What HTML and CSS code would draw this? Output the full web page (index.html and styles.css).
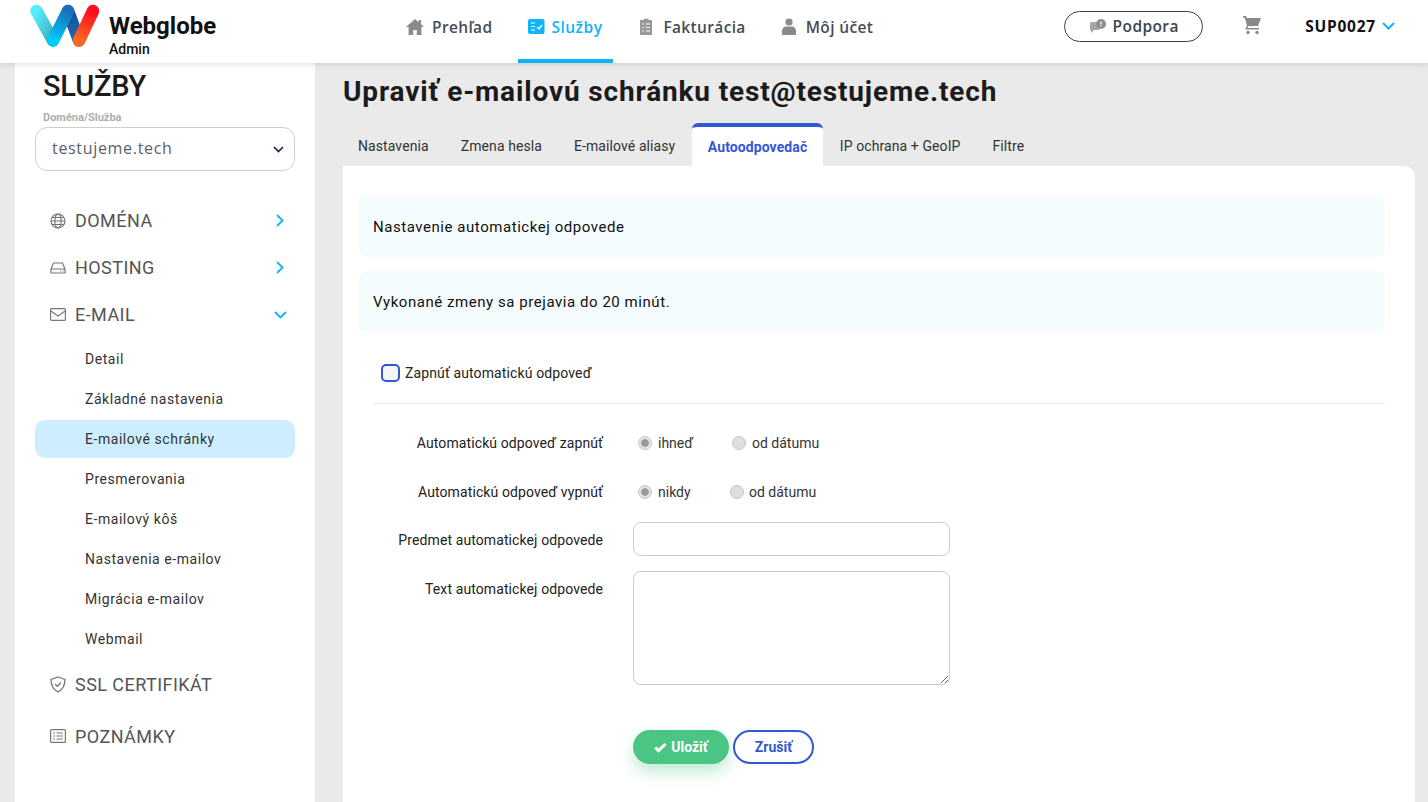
FILE: index.html
```html
<!DOCTYPE html>
<html lang="sk">
<head>
<meta charset="utf-8">
<title>Webglobe Admin</title>
<link rel="stylesheet" href="styles.css">
</head>
<body>
<header class="topbar">
  <a class="brand">
    <svg class="logo" width="74" height="50" viewBox="0 0 74 50">
      <defs>
        <linearGradient id="g1" x1="0" y1="0" x2="1" y2="1"><stop offset="0" stop-color="#55eefc"/><stop offset="1" stop-color="#3aa9bd"/></linearGradient>
        <linearGradient id="g2" gradientUnits="userSpaceOnUse" x1="39" y1="9" x2="24" y2="38.5"><stop offset="0" stop-color="#1a6fb8"/><stop offset="1" stop-color="#00ccf8"/></linearGradient>
        <linearGradient id="g3" gradientUnits="userSpaceOnUse" x1="39" y1="9" x2="50" y2="38.500"><stop offset="0" stop-color="#0a4f9e"/><stop offset="1" stop-color="#2a6aa8"/></linearGradient>
        <linearGradient id="g4" gradientUnits="userSpaceOnUse" x1="64" y1="9" x2="50" y2="38.500"><stop offset="0" stop-color="#ff0a1e"/><stop offset="1" stop-color="#ff6a20"/></linearGradient>
      </defs>
      <line x1="7.500" y1="9" x2="24" y2="38.500" stroke="url(#g1)" stroke-width="12.500" stroke-linecap="round"/>
      <line x1="39" y1="9" x2="50" y2="38.500" stroke="url(#g3)" stroke-width="12.500" stroke-linecap="round"/>
      <line x1="24" y1="38.500" x2="39" y2="9" stroke="url(#g2)" stroke-width="12.500" stroke-linecap="round"/>
      <line x1="50" y1="38.500" x2="64" y2="9" stroke="url(#g4)" stroke-width="12.500" stroke-linecap="round"/>
    </svg>
    <span class="brand-text"><b>Webglobe</b><small>Admin</small></span>
  </a>
  <nav class="mainnav">
    <a class="navitem home">
      <svg width="18" height="16" viewBox="0 0 18 16"><path fill="#8a8a8a" d="M9 0 0 8h2.600v8h4.600v-5h3.600v5h4.600V8H18L15 5.300V1h-2.400v2.200z"/></svg>Prehľad</a>
    <a class="navitem active">
      <svg width="17" height="16" viewBox="0 0 17 16"><rect width="16.500" height="15" rx="2" fill="#0db4fb"/><path d="M3 4h4M3 7.500h4M3 11h4" stroke="#fff" stroke-width="1.200"/><path d="m9 8 2 2 3-4" stroke="#fff" stroke-width="1.400" fill="none"/></svg>Služby</a>
    <a class="navitem billing">
      <svg width="14" height="17" viewBox="0 0 14 17"><path fill="#9a9a9a" d="M1 2h3.500V.8h5V2H13v15H1z"/><path d="M3.500 6h1.500M7 6h4M3.500 9.500h1.500M7 9.500h4M3.500 13h1.500M7 13h4" stroke="#fff" stroke-width="1.100"/></svg>Fakturácia</a>
    <a class="navitem profile">
      <svg width="14" height="17" viewBox="0 0 14 17"><circle cx="7" cy="4" r="3.600" fill="#8a8a8a"/><path fill="#8a8a8a" d="M0 17v-4c0-3 2-4.500 4-4.500h6c2 0 4 1.500 4 4.500v4z"/></svg>Môj účet</a>
  </nav>
  <div class="tools">
    <a class="support">
      <svg width="18" height="15" viewBox="0 0 18 15"><path fill="#a6a6a6" d="M2 3h8v8H5l-3 3v-3H1V4z"/><circle cx="12" cy="5" r="5" fill="#8f8f8f"/><path d="M12 2.500v3M12 6.600v1" stroke="#fff" stroke-width="1.200"/></svg>Podpora</a>
    <svg class="cart" width="20" height="20" viewBox="0 0 20 20"><path fill="#8a8a8a" d="M1 1h3l.8 2H19l-3 8H6.500l-1 2H17v1.600H3l2-3.700L2.800 2.700H1z"/><circle cx="6" cy="17.500" r="1.700" fill="#8a8a8a"/><circle cx="15" cy="17.500" r="1.700" fill="#8a8a8a"/></svg>
    <a class="account">SUP0027<svg width="13" height="8" viewBox="0 0 13 8"><path d="m1 1 5.500 5.500L12 1" fill="none" stroke="#0db4fb" stroke-width="2"/></svg></a>
  </div>
</header>

<div class="layout">
  <aside class="sidebar">
    <h2 class="side-title">SLUŽBY</h2>
    <div class="field-label">Doména/Služba</div>
    <div class="domain-select"><span class="domain-value">testujeme.tech</span>
      <svg width="11" height="7" viewBox="0 0 11 7"><path d="m1 1 4.500 4.500L10 1" fill="none" stroke="#1e2a4a" stroke-width="1.700"/></svg>
    </div>
    <ul class="menu">
      <li class="menu-head">
        <svg class="mi" width="16" height="16" viewBox="0 0 16 16" fill="none" stroke="#777" stroke-width="1.200"><circle cx="8" cy="8" r="7"/><ellipse cx="8" cy="8" rx="3.200" ry="7"/><path d="M1 8h14M2 4.500h12M2 11.500h12"/></svg>
        <span>DOMÉNA</span>
        <svg class="chev" width="8" height="13" viewBox="0 0 8 13"><path d="m1 1 5.500 5.500L1 12" fill="none" stroke="#0db4fb" stroke-width="1.800"/></svg>
      </li>
      <li class="menu-head">
        <svg class="mi" width="16" height="12" viewBox="0 0 16 12" fill="none" stroke="#777" stroke-width="1.200"><path d="M1 7 3.500 1h9L15 7v4H1zM1 7h14"/><path d="M10 9h1M12.500 9h1"/></svg>
        <span>HOSTING</span>
        <svg class="chev" width="8" height="13" viewBox="0 0 8 13"><path d="m1 1 5.500 5.500L1 12" fill="none" stroke="#0db4fb" stroke-width="1.800"/></svg>
      </li>
      <li class="menu-head email">
        <svg class="mi" width="16" height="13" viewBox="0 0 16 13" fill="none" stroke="#777" stroke-width="1.200"><rect x=".6" y=".6" width="14.800" height="11.800" rx="1"/><path d="m1 3 7 5 7-5"/></svg>
        <span>E-MAIL</span>
        <svg class="chev chev-down" width="13" height="8" viewBox="0 0 13 8"><path d="m1 1 5.500 5.500L12 1" fill="none" stroke="#0db4fb" stroke-width="1.800"/></svg>
      </li>
      <li class="sub">Detail</li>
      <li class="sub">Základné nastavenia</li>
      <li class="sub selected">E-mailové schránky</li>
      <li class="sub">Presmerovania</li>
      <li class="sub">E-mailový kôš</li>
      <li class="sub">Nastavenia e-mailov</li>
      <li class="sub">Migrácia e-mailov</li>
      <li class="sub">Webmail</li>
      <li class="menu-head ssl">
        <svg class="mi" width="16" height="17" viewBox="0 0 16 17" fill="none" stroke="#777" stroke-width="1.300"><path d="M8 1 15 3.500C15 9 13 13.500 8 16 3 13.500 1 9 1 3.500z"/><path d="m5 8 2.300 2.300L11 6.500"/></svg>
        <span>SSL CERTIFIKÁT</span>
      </li>
      <li class="menu-head notes">
        <svg class="mi" width="16" height="14" viewBox="0 0 16 14" fill="none" stroke="#777" stroke-width="1.200"><rect x=".6" y=".6" width="14.800" height="12.800" rx="1"/><path d="M3 4h2M6.500 4H13M3 7h2M6.500 7H13M3 10h2M6.500 10H13"/></svg>
        <span>POZNÁMKY</span>
      </li>
    </ul>
  </aside>

  <main class="content">
    <h1 class="page-title">Upraviť e-mailovú schránku test@testujeme.tech</h1>
    <div class="tabs">
      <a class="tab">Nastavenia</a>
      <a class="tab">Zmena hesla</a>
      <a class="tab">E-mailové aliasy</a>
      <a class="tab current">Autoodpovedač</a>
      <a class="tab">IP ochrana + GeoIP</a>
      <a class="tab">Filtre</a>
    </div>
    <section class="card">
      <div class="notice">Nastavenie automatickej odpovede</div>
      <div class="notice">Vykonané zmeny sa prejavia do 20 minút.</div>
      <label class="enable"><input type="checkbox" class="check">Zapnúť automatickú odpoveď</label>
      <hr class="rule">
      <form class="form">
        <div class="row first">
          <span class="lbl">Automatickú odpoveď zapnúť</span>
          <div class="radios">
            <label class="radio gap-on"><input type="radio" name="a" checked>ihneď</label>
            <label class="radio"><input type="radio" name="a">od dátumu</label>
          </div>
        </div>
        <div class="row second">
          <span class="lbl">Automatickú odpoveď vypnúť</span>
          <div class="radios">
            <label class="radio gap-off"><input type="radio" name="b" checked>nikdy</label>
            <label class="radio tight"><input type="radio" name="b">od dátumu</label>
          </div>
        </div>
        <div class="row third">
          <span class="lbl">Predmet automatickej odpovede</span>
          <input type="text" class="text-input">
        </div>
        <div class="row fourth">
          <span class="lbl">Text automatickej odpovede</span>
          <textarea class="text-area"></textarea>
        </div>
        <div class="actions">
          <button type="button" class="btn save">
            <svg width="13" height="11" viewBox="0 0 13 11"><path d="m1.300 5.500 3.200 3.200L11.500 2" fill="none" stroke="#fff" stroke-width="3"/></svg>Uložiť</button>
          <button type="button" class="btn cancel">Zrušiť</button>
        </div>
      </form>
    </section>
  </main>
</div>
</body>
</html>
```
FILE: styles.css
```css
* { box-sizing: border-box; }
html, body { margin: 0; height: 802px; overflow: hidden; }
body { background: #eaeaea; font-family: Roboto, sans-serif; color: #212529; }
a { color: inherit; text-decoration: none; }

.topbar {
  position: relative; z-index: 2;
  height: 63px; background: #fff;
  display: flex; align-items: center;
  box-shadow: 0 1px 6px rgba(0,0,0,.14);
}
.brand { display: flex; align-items: flex-start; width: 406px; padding-left: 29px; height: 63px; padding-top: 2px; }
.logo { flex: none; }
.brand-text { margin-left: 6px; display: flex; flex-direction: column; padding-top: 10px; color: #111; }
.brand-text b { font-size: 24px; line-height: 28px; font-weight: 700; }
.brand-text small { font-size: 14px; line-height: 16px; font-weight: 500; margin-top: 1px; }

.mainnav { display: flex; height: 63px; }
.navitem {
  display: flex; align-items: center; height: 63px;
  font-family: "Open Sans", sans-serif; font-size: 15.500px; font-weight: 600; letter-spacing: .35px; color: #484c55;
  padding-bottom: 10px;
}
.home { gap: 8px; margin-right: 26px; }
.active { color: #0db4fb; border-bottom: 4px solid #0db4fb; padding: 0 0 6px 10px; margin-right: 26px; width: 95px; gap: 6px; letter-spacing: .5px; }
.billing { gap: 10px; margin-right: 36px; }
.profile { gap: 10px; }

.tools { display: flex; align-items: center; margin-left: 191px; height: 63px; padding-bottom: 11px; }
.support {
  display: flex; align-items: center; justify-content: center; gap: 6px;
  width: 139px; height: 31px; border: 1px solid #3b3f46; border-radius: 16px;
  font-family: "Open Sans", sans-serif; font-size: 15.500px; font-weight: 600; letter-spacing: .4px; color: #3c4350;
}
.cart { margin-left: 39px; margin-bottom: 2px; }
.account {
  margin-left: 43px; display: flex; align-items: center; gap: 6px;
  font-family: "Open Sans", sans-serif; font-size: 15.500px; font-weight: 700; letter-spacing: .75px; color: #111;
}

.layout { display: flex; height: 739px; padding-left: 15px; }
.sidebar { width: 300px; background: #fff; padding: 5px 20px 0; flex: none; }
.side-title { margin: 0 0 0 8px; font-size: 29px; line-height: 36px; font-weight: 500; letter-spacing: -.2px; color: #1b1b1b; }
.field-label { margin: 8px 0 0 8px; font-size: 11px; line-height: 12px; font-weight: 700; color: #aeaeae; }
.domain-select {
  margin-top: 3px; height: 44px; border: 1px solid #cfcfcf; border-radius: 12px;
  display: flex; align-items: center; justify-content: space-between;
  padding: 0 10px 0 16px;
  font-family: "Open Sans", sans-serif; font-size: 16px; letter-spacing: .68px; color: #5a5f6b;
}
.domain-value { padding-bottom: 2px; }
.menu { list-style: none; margin: 26px 0 0; padding: 0; }
.menu-head {
  display: flex; align-items: center; height: 47px; padding-left: 15px;
  font-size: 18px; letter-spacing: .45px; color: #555;
}
.email { height: 48px; padding-bottom: 1px; }
.mi { flex: none; margin-right: 9px; }
.menu-head span { flex: 1; }
.chev { margin-right: 11px; }
.chev-down { margin-right: 8px; }
.sub { height: 40px; display: flex; align-items: center; padding-left: 50px; font-size: 14px; letter-spacing: .55px; color: #333; }
.selected { background: #cdeefe; border-radius: 10px; height: 38px; margin: 1px 0; }
.ssl { height: 51px; }
.notes { height: 52px; }

.content { flex: 1; padding: 0 13px 0 28px; min-width: 0; }
.page-title { margin: 10px 0 0; font-size: 28px; line-height: 38px; font-weight: 700; letter-spacing: .85px; color: #1b1b1b; }
.tabs { display: flex; height: 43px; margin-top: 12px; }
.tab { display: flex; align-items: center; padding: 2px 15px 0; font-size: 14px; letter-spacing: .09px; color: #333; margin-right: 2px; }
.tab.current { background: #fff; color: #3358d4; font-weight: 700; border-top: 4px solid #3358d4; border-radius: 6px 6px 0 0; padding: 0 15.500px 0; margin-right: 2px; }
.card { background: #fff; border-radius: 0 10px 0 0; height: 640px; padding: 30px 30px 0 15px; }
.notice {
  height: 61px; background: #f4fcfe; border-radius: 10px; margin-bottom: 14px;
  display: flex; align-items: center; padding-left: 15px;
  font-size: 15px; letter-spacing: .55px; color: #111;
}
.enable { display: flex; align-items: center; height: 20px; margin: 31px 0 0 23px; font-size: 14px; letter-spacing: .12px; color: #222; }
.check {
  appearance: none; width: 19px; height: 18px; margin: 0 5px 0 0;
  border: 2px solid #3358d4; border-radius: 5px; background: #f6f6f6;
}
.rule { border: 0; border-top: 1px solid #e8e8e8; margin: 20px 0 0 15px; }
.row { display: flex; }
.lbl { width: 245px; flex: none; text-align: right; font-size: 14px; letter-spacing: .1px; color: #222; margin-right: 30px; }
.first { margin-top: 30px; height: 17px; align-items: center; }
.second { margin-top: 32px; height: 17px; align-items: center; }
.third { margin-top: 22px; align-items: center; height: 34px; }
.third .lbl { padding-top: 2px; }
.fourth { margin-top: 15px; }
.fourth .lbl { padding-top: 10px; }
.radios { display: flex; margin-left: 5px; }
.radio { display: flex; align-items: center; font-size: 14px; color: #333; }
.radio input {
  appearance: none; width: 14px; height: 14px; margin: 0 6px 0 0; border-radius: 50%;
  background: #dedede; border: 1px solid #c6c6c6;
}
.radio input:checked { background: radial-gradient(circle, #9a9a9a 0 3.500px, #e2e2e2 4px); }
.radio.tight input { margin-right: 5px; }
.gap-on { width: 94px; }
.gap-off { width: 92px; }
.text-input, .text-area { width: 317px; border: 1px solid #c6ccd8; border-radius: 8px; background: #fff; flex: none; display: block; }
.text-input { height: 34px; }
.text-area { height: 114px; }
.actions { display: flex; gap: 4px; margin: 45px 0 0 275px; }
.btn { height: 34px; border-radius: 17px; font-family: Roboto, sans-serif; font-size: 14px; font-weight: 700; padding: 0; display: flex; align-items: center; justify-content: center; }
.save { width: 96px; background: #4bc584; color: #fff; border: 0; gap: 4px; box-shadow: 0 8px 16px rgba(75,197,132,.35); }
.cancel { width: 81px; background: #fff; color: #3358d4; border: 2px solid #3358d4; }
```
